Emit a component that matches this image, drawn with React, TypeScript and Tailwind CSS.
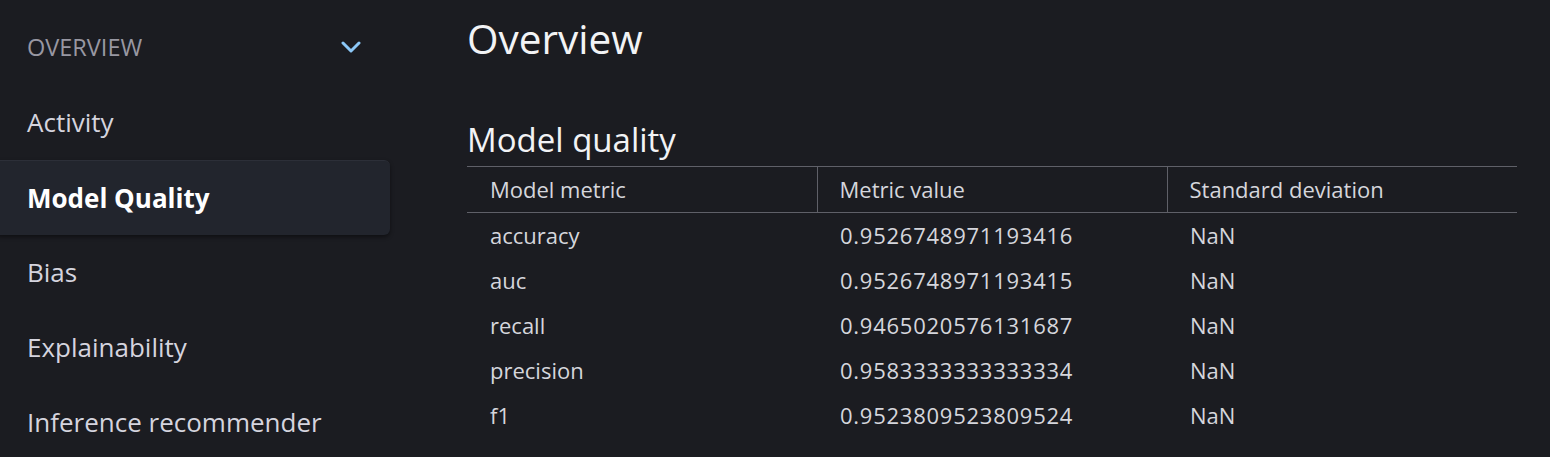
const rows = [
  { metric: 'accuracy', value: '0.9526748971193416', std: 'NaN' },
  { metric: 'auc', value: '0.9526748971193415', std: 'NaN' },
  { metric: 'recall', value: '0.9465020576131687', std: 'NaN' },
  { metric: 'precision', value: '0.9583333333333334', std: 'NaN' },
  { metric: 'f1', value: '0.9523809523809524', std: 'NaN' },
];

const navItems = ['Activity', 'Model Quality', 'Bias', 'Explainability', 'Inference recommender'];

export default function App() {
  return (
    <div
      className="flex h-[457px] w-full overflow-hidden bg-[#1b1c21] text-[#d5d4de]"
      style={{ fontFamily: '"Open Sans", "Noto Sans", sans-serif' }}
    >
      {/* Sidebar */}
      <aside className="w-[390px] shrink-0 pt-[10px]">
        <div className="flex h-[75px] items-center justify-between pl-[27px] pr-[29px]">
          <span className="text-[23.5px] text-[#9897a2]">OVERVIEW</span>
          <svg width="20" height="12" viewBox="0 0 20 12" fill="none" className="mb-[2px]">
            <polyline
              points="2,2 10,10 18,2"
              stroke="#8cc8f8"
              strokeWidth="3"
              strokeLinecap="round"
              strokeLinejoin="round"
            />
          </svg>
        </div>
        {navItems.map((item) =>
          item === 'Model Quality' ? (
            <div
              key={item}
              className="-ml-[6px] flex h-[75px] items-center rounded-[6px] border-t border-[#2c2f38] bg-[#22252d] pl-[33px] text-[26px] font-bold text-white shadow-[0_2px_4px_rgba(0,0,0,0.45)]"
            >
              {item}
            </div>
          ) : (
            <div key={item} className="flex h-[75px] items-center pl-[27px] text-[26px]">
              {item}
            </div>
          )
        )}
      </aside>

      {/* Main */}
      <main className="flex-1 pl-[77px] pr-[33px] pt-[15px]">
        <h1 className="text-[40.5px] leading-[48px] text-[#f2f3f5]">Overview</h1>
        <h2 className="mt-[57px] text-[33px] leading-[40px] text-[#f2f3f5]">Model quality</h2>
        <table className="mt-[6px] w-full table-fixed border-collapse text-[22px] text-[#d5d6dc]">
          <thead>
            <tr className="h-[46px] border-y border-[#5f6068]">
              <th className="pl-[23px] text-left font-normal">Model metric</th>
              <th className="border-l border-[#5f6068] pl-[22px] text-left font-normal">Metric value</th>
              <th className="border-l border-[#5f6068] pl-[22px] text-left font-normal">Standard deviation</th>
            </tr>
          </thead>
          <tbody>
            {rows.map((r) => (
              <tr key={r.metric} className="h-[45px]">
                <td className="pl-[23px]">{r.metric}</td>
                <td className="pl-[23px] tracking-[0.75px]">{r.value}</td>
                <td className="pl-[23px]">{r.std}</td>
              </tr>
            ))}
          </tbody>
        </table>
      </main>
    </div>
  );
}
